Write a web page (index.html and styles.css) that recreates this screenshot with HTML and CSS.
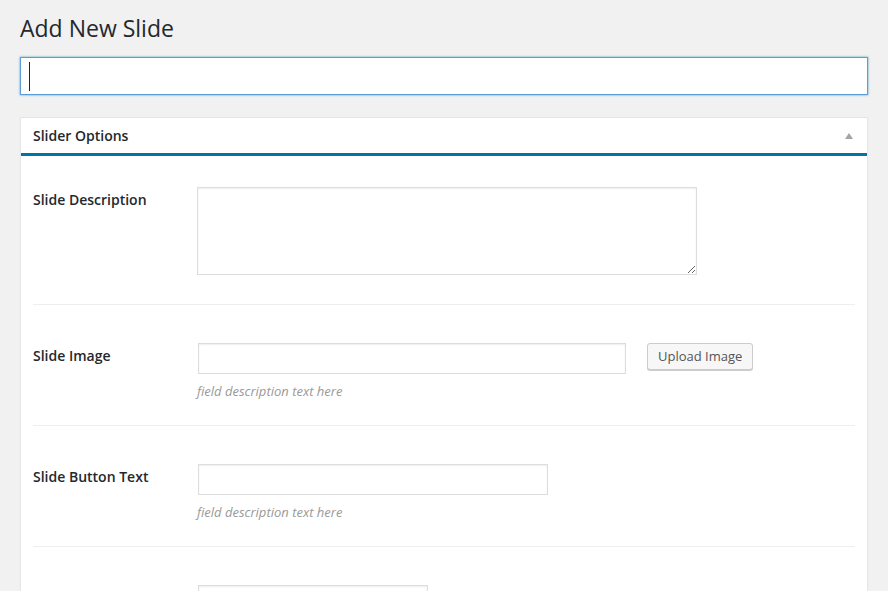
FILE: index.html
```html
<!DOCTYPE html>
<html lang="en">
<head>
<meta charset="utf-8">
<title>Add New Slide</title>
<link rel="stylesheet" href="styles.css">
</head>
<body>
<div class="wrap">
  <h1 class="page-title">Add New Slide</h1>
  <div class="title-input" role="textbox" aria-label="Title"><span class="caret"></span></div>

  <div class="postbox">
    <div class="postbox-header">
      <h2 class="postbox-title">Slider Options</h2>
      <span class="toggle-arrow" aria-hidden="true"></span>
    </div>
    <div class="postbox-body">
      <div class="field-row first">
        <label class="field-label">Slide Description</label>
        <div class="field-control">
          <textarea class="text-area"></textarea>
        </div>
      </div>
      <div class="field-row">
        <label class="field-label">Slide Image</label>
        <div class="field-control">
          <div class="inline-group">
            <input type="text" class="text-input w-image">
            <button type="button" class="btn">Upload Image</button>
          </div>
          <p class="description">field description text here</p>
        </div>
      </div>
      <div class="field-row">
        <label class="field-label">Slide Button Text</label>
        <div class="field-control">
          <input type="text" class="text-input w-medium">
          <p class="description">field description text here</p>
        </div>
      </div>
      <div class="field-row">
        <label class="field-label">Slide Button Link</label>
        <div class="field-control">
          <input type="text" class="text-input w-small">
          <p class="description">field description text here</p>
        </div>
      </div>
    </div>
  </div>
</div>
</body>
</html>
```
FILE: styles.css
```css
html, body {
  margin: 0;
  padding: 0;
  background: #f1f1f1;
  font-family: "Open Sans", "Noto Sans", sans-serif;
  color: #23282d;
  overflow: hidden;
}

.wrap {
  padding: 0 20px 40px 20px;
}

.page-title {
  margin: 0;
  padding: 13px 0 0 0;
  font-size: 23px;
  font-weight: 400;
  line-height: 30px;
  height: 44px;
  color: #23282d;
}

.title-input {
  box-sizing: border-box;
  height: 38px;
  background: #fff;
  border: 1px solid #5b9dd9;
  box-shadow: 0 0 2px rgba(30, 140, 190, 0.8);
  padding: 4px 8px 0 8px;
}

.caret {
  display: block;
  width: 1px;
  height: 29px;
  background: #23282d;
}

.postbox {
  margin-top: 22px;
  background: #fff;
  border: 1px solid #e5e5e5;
  box-shadow: 0 1px 1px rgba(0, 0, 0, 0.04);
}

.postbox-header {
  height: 35px;
  display: flex;
  align-items: center;
  justify-content: space-between;
  padding: 0 14px 0 12px;
  border-bottom: 3px solid #0073aa;
}

.postbox-title {
  margin: 0;
  font-size: 14px;
  font-weight: 600;
  line-height: 1.4;
  color: #23282d;
}

.toggle-arrow {
  width: 0;
  height: 0;
  border-left: 4px solid transparent;
  border-right: 4px solid transparent;
  border-bottom: 6px solid #a0a5aa;
  margin-top: 1px;
}

.postbox-body {
  padding: 0 12px;
}

.field-row {
  display: grid;
  grid-template-columns: 164px 1fr;
  padding: 38px 0 24px 0;
  border-bottom: 1px solid #eee;
}

.field-row.first {
  padding-top: 31px;
  padding-bottom: 29px;
}

.field-label {
  font-size: 14px;
  font-weight: 600;
  line-height: 20px;
  padding-top: 3px;
  color: #23282d;
}

.field-control {
  min-width: 0;
}

.text-area {
  display: block;
  box-sizing: border-box;
  width: 500px;
  height: 88px;
  margin: 0;
  border: 1px solid #ddd;
  box-shadow: inset 0 1px 2px rgba(0, 0, 0, 0.07);
  background: #fff;
  font-family: inherit;
  font-size: 14px;
  padding: 2px 6px;
  border-radius: 0;
}

.text-input {
  display: block;
  box-sizing: border-box;
  height: 31px;
  margin: 0 0 0 1px;
  border: 1px solid #ddd;
  box-shadow: inset 0 1px 2px rgba(0, 0, 0, 0.07);
  background: #fff;
  font-family: inherit;
  font-size: 14px;
  padding: 3px 5px;
  border-radius: 0;
}

.w-image { width: 428px; }
.w-medium { width: 350px; }
.w-small { width: 230px; }

.inline-group {
  display: flex;
  align-items: flex-start;
  gap: 21px;
}

.btn {
  box-sizing: border-box;
  height: 27px;
  margin: 0;
  padding: 0 10px;
  font-family: inherit;
  font-size: 13px;
  line-height: 25px;
  color: #555;
  background: #f7f7f7;
  border: 1px solid #ccc;
  border-radius: 3px;
  box-shadow: 0 1px 0 #ccc;
  white-space: nowrap;
}

.description {
  margin: 7px 0 0 0;
  font-size: 13px;
  font-style: italic;
  line-height: 20px;
  color: #999;
}
```
